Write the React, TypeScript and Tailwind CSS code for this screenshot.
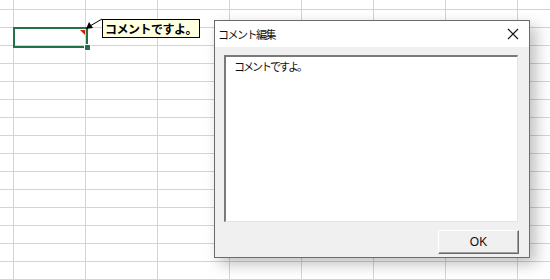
import React from "react";

const cols = [14, 72, 72, 72, 72, 72, 72, 72, 72];
const rows = 16;

export default function App() {
  const cells: React.ReactNode[] = [];
  for (let r = 0; r < rows; r++) {
    for (let c = 0; c < cols.length; c++) {
      cells.push(<div key={`${r}-${c}`} className="border-r border-b border-[#d4d4d4]" />);
    }
  }

  return (
    <div className="relative w-[550px] h-[280px] overflow-hidden bg-white" style={{ fontFamily: '"Noto Sans CJK JP", "Noto Sans", sans-serif' }}>
      {/* sheet grid */}
      <div className="grid grid-cols-[14px_repeat(8,72px)] grid-rows-[10px_repeat(15,18px)]">{cells}</div>

      {/* selected cell */}
      <div className="absolute left-[13px] top-[27px] w-[75px] h-[21px] border-2 border-[#217346]" />
      <div className="absolute left-[84px] top-[44px] w-[5px] h-[5px] bg-[#217346] border border-white box-content" />
      <svg className="absolute left-0 top-0" width="120" height="60">
        <polygon points="80,30 85,30 85,35" fill="#d81e06" />
        <line x1="102" y1="19" x2="90" y2="26" stroke="#000" strokeWidth="1" />
        <polygon points="86,29 89,22 93,28" fill="#000" />
      </svg>

      {/* comment */}
      <div className="absolute left-[102px] top-[19px] w-[98px] h-[19px] bg-[#ffffe1] border border-black flex items-center pl-[2px] overflow-hidden">
        <span className="text-[12px] font-bold leading-none text-black whitespace-nowrap tracking-[-0.5px]">コメントですよ。</span>
      </div>

      {/* dialog */}
      <div className="absolute left-[214px] top-[20px] w-[316px] h-[238px] border border-[#6b6b6b] bg-[#f0f0f0] flex flex-col shadow-[6px_6px_14px_rgba(0,0,0,0.25)]">
        <div className="h-[26px] bg-white flex items-center justify-between pl-[3px] pr-[10px]">
          <span className="text-[11px] text-[#111] leading-none tracking-[-1.5px]">コメント編集</span>
          <svg width="12" height="12" viewBox="0 0 12 12">
            <path d="M1 1L11 11M11 1L1 11" stroke="#111" strokeWidth="1.1" />
          </svg>
        </div>
        <div className="flex flex-col pl-[9px] pt-[8px]">
          <div className="w-[294px] h-[167px] bg-white border-t-2 border-l-2 border-r border-b border-t-[#7a7a7a] border-l-[#7a7a7a] border-r-[#e3e3e3] border-b-[#e3e3e3] pl-[8px] pt-[3px] text-[11px] leading-[13px] text-[#111] tracking-[-2px]">
            コメントですよ。
          </div>
          <div className="flex justify-end pr-[10px] pt-[8px]">
            <button className="w-[81px] h-[24px] bg-[#f0f0f0] border border-t-white border-l-white border-r-[#696969] border-b-[#696969] shadow-[inset_-1px_-1px_0_#a0a0a0] text-[12px] text-[#111] flex items-center justify-center" style={{ fontFamily: '"Liberation Sans", sans-serif' }}>
              OK
            </button>
          </div>
        </div>
      </div>
    </div>
  );
}
